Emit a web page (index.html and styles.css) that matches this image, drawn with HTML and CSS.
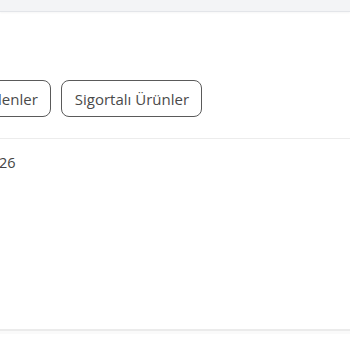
FILE: index.html
```html
<!DOCTYPE html>
<html lang="tr">
<head>
<meta charset="utf-8">
<link rel="stylesheet" href="styles.css">
</head>
<body>
<div class="topbar"></div>
<div class="tabs">
  <div class="tab-track">
    <button class="tab">Yeni Gelenler</button>
    <button class="tab">Sigortalı Ürünler</button>
  </div>
</div>
<div class="content">
  <div class="value">26</div>
</div>
<div class="footer-line"></div>
</body>
</html>
```
FILE: styles.css
```css
html, body {
  margin: 0;
  padding: 0;
  background: #ffffff;
  font-family: "Open Sans", "Noto Sans", sans-serif;
  width: 350px;
  height: 350px;
  overflow: hidden;
}
.topbar {
  height: 11px;
  background: #f3f4f6;
  border-bottom: 1px solid #e3e5e9;
  box-shadow: 0 1px 2px rgba(0,0,0,0.04);
}
.tabs {
  height: 127px;
  border-bottom: 1px solid #ececec;
  overflow: hidden;
  box-sizing: border-box;
  padding-top: 68px;
}
.tab-track {
  display: flex;
  gap: 10px;
  margin-left: -69px;
}
.tab {
  height: 37px;
  box-sizing: border-box;
  padding: 0 12px 0 13px;
  border: 1px solid #5a5a5a;
  border-radius: 8px;
  background: #fff;
  color: #4a4a4a;
  font-family: "Open Sans", "Noto Sans", sans-serif;
  font-size: 15px;
  white-space: nowrap;
}
.content {
  height: 190px;
  padding-top: 14px;
  box-sizing: border-box;
}
.value {
  font-size: 14.5px;
  color: #444;
  margin-left: -1px;
}
.footer-line {
  height: 2px;
  background: #ebebeb;
  border-bottom: 3px solid #fafafa;
}
```
